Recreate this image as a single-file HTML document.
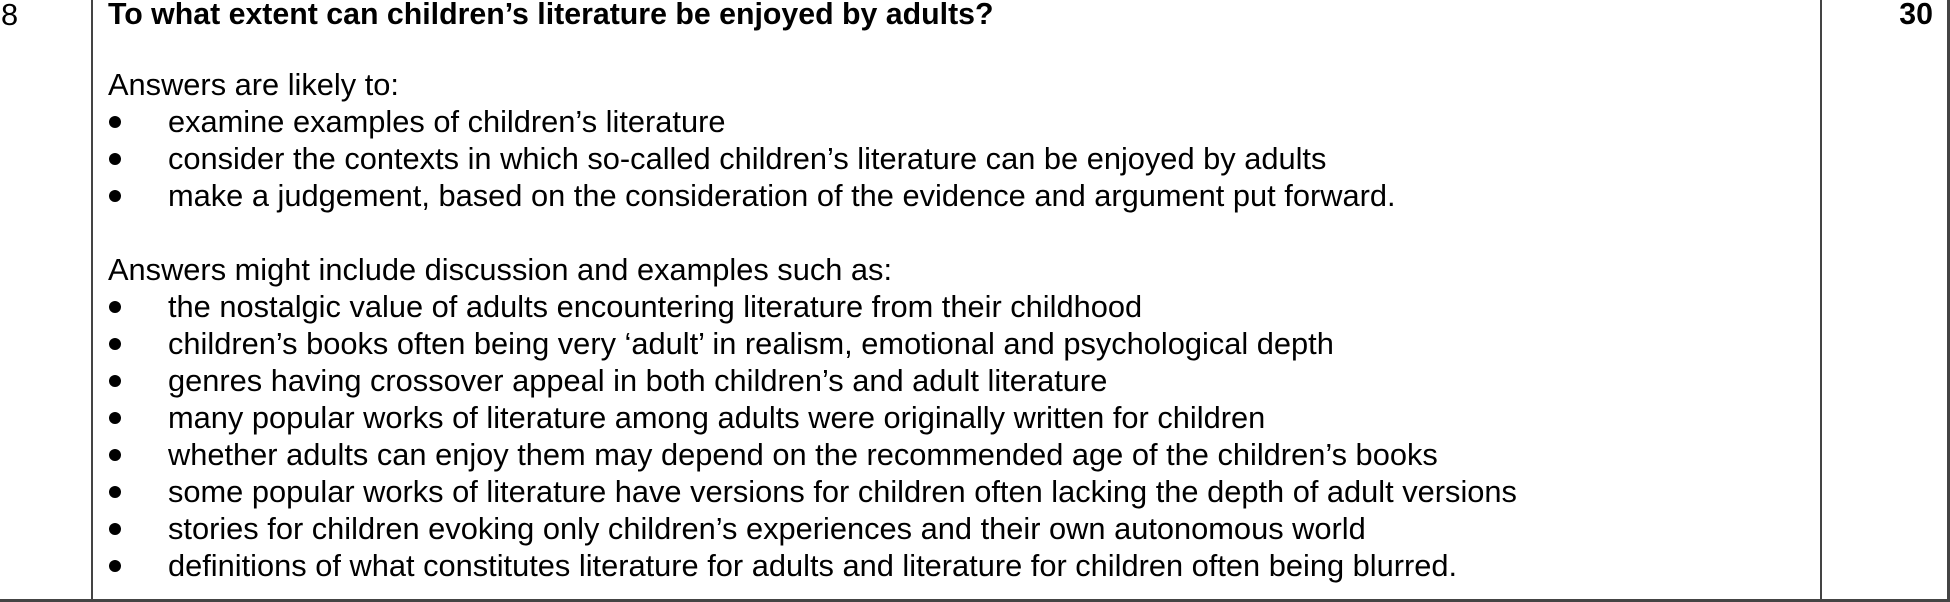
<!DOCTYPE html>
<html><head><meta charset="utf-8"><style>
html,body{margin:0;padding:0;background:#fff;}
body{width:1950px;height:602px;position:relative;overflow:hidden;font-family:"Liberation Sans",Arial,sans-serif;font-size:30.8px;color:#000;}
.l{position:absolute;background:#444;}
.t{position:absolute;white-space:nowrap;line-height:37px;}
.b{position:absolute;left:108px;width:14px;height:14px;}
.b::before{content:"";position:absolute;left:1px;top:0;width:12px;height:12px;border-radius:50%;background:#000;}
</style></head><body>
<div class="l" style="left:91px;top:0;width:2px;height:602px"></div>
<div class="l" style="left:1820px;top:0;width:2px;height:602px"></div>
<div class="l" style="left:1947px;top:0;width:3px;height:602px"></div>
<div class="l" style="left:0;top:599px;width:1950px;height:3px"></div>
<div class="t" style="left:1px;top:-4px">8</div>
<div class="t" style="left:108px;top:-4px;font-weight:bold;font-size:30.3px">To what extent can children’s literature be enjoyed by adults?</div>
<div class="t" style="right:17px;top:-4px;font-weight:bold;font-size:30.3px">30</div>
<div id="c"></div>
<script>
var lines=[[66,0,"Answers are likely to:"],[103,1,"examine examples of children’s literature"],[140,1,"consider the contexts in which so-called children’s literature can be enjoyed by adults"],[177,1,"make a judgement, based on the consideration of the evidence and argument put forward."],
[251,0,"Answers might include discussion and examples such as:"],
[288,1,"the nostalgic value of adults encountering literature from their childhood"],
[325,1,"children’s books often being very ‘adult’ in realism, emotional and psychological depth"],
[362,1,"genres having crossover appeal in both children’s and adult literature"],
[399,1,"many popular works of literature among adults were originally written for children"],
[436,1,"whether adults can enjoy them may depend on the recommended age of the children’s books"],
[473,1,"some popular works of literature have versions for children often lacking the depth of adult versions"],
[510,1,"stories for children evoking only children’s experiences and their own autonomous world"],
[547,1,"definitions of what constitutes literature for adults and literature for children often being blurred."]];
var h="";
lines.forEach(function(a){
 if(a[1]){h+='<div class="b" style="top:'+(a[0]+13)+'px"></div><div class="t" style="left:168px;top:'+a[0]+'px">'+a[2]+'</div>';}
 else h+='<div class="t" style="left:108px;top:'+a[0]+'px">'+a[2]+'</div>';
});
document.getElementById("c").innerHTML=h;
</script>
</body></html>
